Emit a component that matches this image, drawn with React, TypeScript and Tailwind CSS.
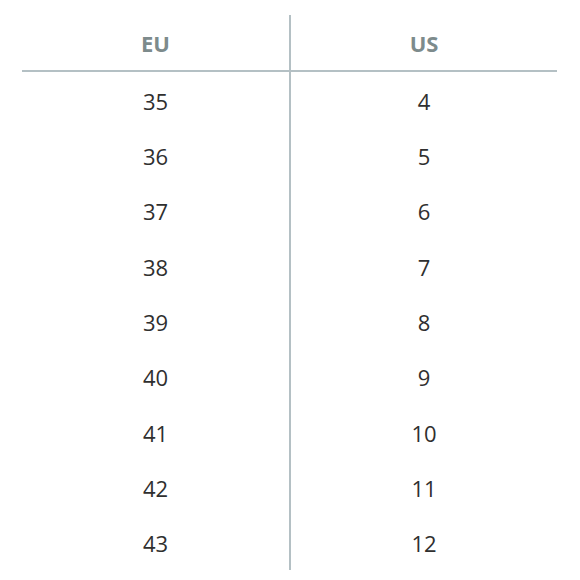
import React from "react";

const rows: [string, string][] = [
  ["35", "4"],
  ["36", "5"],
  ["37", "6"],
  ["38", "7"],
  ["39", "8"],
  ["40", "9"],
  ["41", "10"],
  ["42", "11"],
  ["43", "12"],
];

export default function App() {
  return (
    <div className="w-[580px] h-[580px] bg-white pt-[15px] pl-[22px]" style={{ fontFamily: '"Open Sans", sans-serif' }}>
      <div className="w-[535px] grid grid-cols-[267px_2px_266px]">
        <div className="h-[57px] border-b-2 border-[#b4c0c4] flex items-center justify-center text-[22px] font-bold text-[#7d8b8c] pt-[2px]">EU</div>
        <div className="row-span-10 bg-[#b4c0c4] h-[555px]" />
        <div className="h-[57px] border-b-2 border-[#b4c0c4] flex items-center justify-center text-[22px] font-bold text-[#7d8b8c] pt-[2px]">US</div>
        {rows.map(([eu, us]) => (
          <React.Fragment key={eu}>
            <div className="col-start-1 h-[55.2px] flex items-center justify-center text-[22px] text-[#2f2f2f] pt-[3px]">{eu}</div>
            <div className="col-start-3 h-[55.2px] flex items-center justify-center text-[22px] text-[#2f2f2f] pt-[3px]">{us}</div>
          </React.Fragment>
        ))}
      </div>
    </div>
  );
}
